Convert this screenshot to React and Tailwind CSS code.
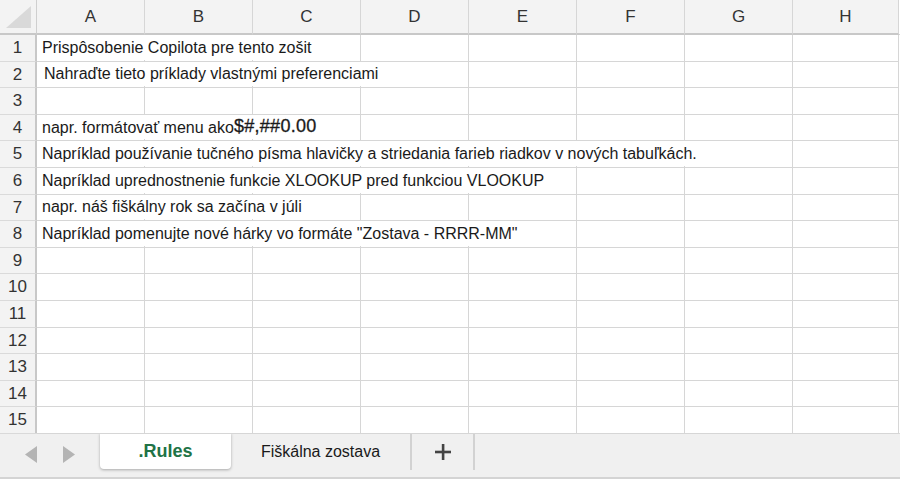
import React from 'react';

const columns = ['A', 'B', 'C', 'D', 'E', 'F', 'G', 'H'];

const rows = [
  { n: 1, text: 'Prispôsobenie Copilota pre tento zošit', pad: 'pr-1' },
  { n: 2, text: 'Nahraďte tieto príklady vlastnými preferenciami', pad: 'pl-[7px] pr-[75px]' },
  { n: 3 },
  { n: 4, text: 'napr. formátovať menu ako', extra: '$#,##0.00' },
  { n: 5, text: 'Napríklad používanie tučného písma hlavičky a striedania farieb riadkov v nových tabuľkách.' },
  { n: 6, text: 'Napríklad uprednostnenie funkcie XLOOKUP pred funkciou VLOOKUP' },
  { n: 7, text: 'napr. náš fiškálny rok sa začína v júli' },
  { n: 8, text: 'Napríklad pomenujte nové hárky vo formáte "Zostava - RRRR-MM"' },
  { n: 9 },
  { n: 10 },
  { n: 11 },
  { n: 12 },
  { n: 13 },
  { n: 14 },
  { n: 15 },
];

function Corner() {
  return (
    <div className="bg-[#f3f3f3] border-r border-b-2 border-r-[#cfcfcf] border-b-[#c8c8c8] flex items-end justify-end p-[5px]">
      <svg width="25" height="22" viewBox="0 0 25 22">
        <polygon points="25,0 25,22 0,22" fill="#d9d9d9" />
      </svg>
    </div>
  );
}

export default function App() {
  return (
    <div
      className="w-[900px] h-[479px] bg-white flex flex-col overflow-hidden text-[#222]"
      style={{ fontFamily: '"Liberation Sans", Arial, sans-serif' }}
    >
      {/* Grid */}
      <div className="grid grid-cols-[37px_repeat(7,108px)_106px_1fr] grid-rows-[35px_repeat(15,26.6px)] h-[433px]">
        <Corner />
        {columns.map((c) => (
          <div
            key={c}
            className="bg-[#f3f3f3] border-r border-b-2 border-r-[#d6d6d6] border-b-[#c8c8c8] flex items-center justify-center text-[17px] text-[#333]"
          >
            {c}
          </div>
        ))}
        <div className="bg-white border-b border-[#d6d6d6]" />

        {rows.map((r) => (
          <React.Fragment key={r.n}>
            <div className="bg-[#f3f3f3] border-r-2 border-b border-r-[#c8c8c8] border-b-[#dadada] flex items-center justify-center text-[17px] text-[#333]">
              {r.n}
            </div>
            {columns.map((c, i) => (
              <div key={c} className="relative border-r border-b border-[#d6d6d6] bg-white">
                {i === 0 && r.text && (
                  <div
                    className={`absolute left-0 top-0 bottom-[1px] z-10 bg-white whitespace-nowrap flex items-center pl-[5px] pt-[1px] text-[16px] text-[#1a1a1a] ${r.pad || 'pr-1'}`}
                  >
                    <span>{r.text}</span>
                    {r.extra && (
                      <span className="text-[18px] tracking-[0.3px] -mt-[2px] [-webkit-text-stroke:0.3px_#1a1a1a]">{r.extra}</span>
                    )}
                  </div>
                )}
              </div>
            ))}
            <div className="bg-white" />
          </React.Fragment>
        ))}
      </div>

      {/* Sheet tabs */}
      <div className="flex-1 bg-[#f0f0f0] border-t border-[#d9d9d9] border-b-2 border-b-[#d4d4d4] flex items-start">
        <div className="w-[100px] h-full flex items-center gap-[26px] pl-[25px] pb-[2px]">
          <svg width="12" height="17" viewBox="0 0 12 17">
            <polygon points="12,0 12,17 0,8.5" fill="#b4b4b4" />
          </svg>
          <svg width="12" height="17" viewBox="0 0 12 17">
            <polygon points="0,0 0,17 12,8.5" fill="#b4b4b4" />
          </svg>
        </div>
        <div className="w-[131px] h-[36px] -mt-px bg-white rounded-b-[4px] shadow-[0_1px_3px_rgba(0,0,0,0.3)] flex items-center justify-center text-[18px] font-bold text-[#217346]">
          .Rules
        </div>
        <div className="w-[181px] h-[36px] flex items-center justify-center text-[16px] text-[#1a1a1a] border-r-2 border-[#d2d2d2]">
          Fiškálna zostava
        </div>
        <div className="w-[63px] h-[36px] flex items-center justify-center border-r-2 border-[#d2d2d2]">
          <svg width="18" height="18" viewBox="0 0 18 18">
            <rect x="7.8" y="1" width="2.6" height="16" fill="#444" />
            <rect x="1" y="7.7" width="16" height="2.6" fill="#444" />
          </svg>
        </div>
      </div>
    </div>
  );
}
